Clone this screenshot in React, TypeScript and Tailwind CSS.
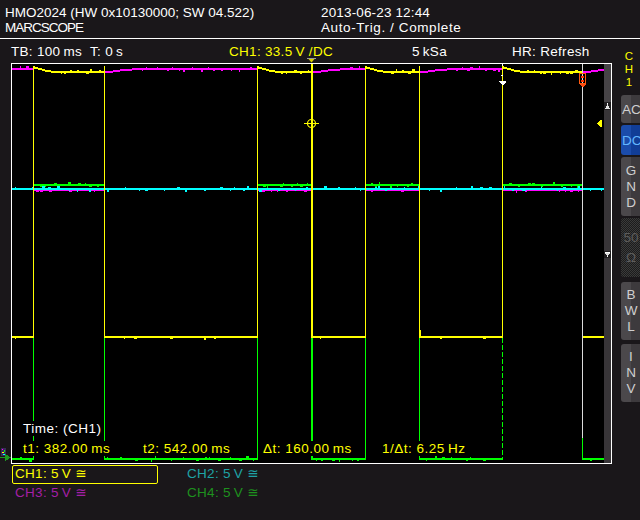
import React from "react";

// pulse train timing (page x coordinates)
const HIGH: [number, number][] = [[33, 104], [257, 311], [365, 419], [502, 582]];
const LOW: [number, number][] = [[12, 33], [104, 257], [312, 365], [419, 502], [582, 604]];
const EDGES = [33, 104, 257, 365, 419];

let seed = 11;
const rnd = () => {
  seed = (seed * 16807) % 2147483647;
  return seed / 2147483647;
};

type Tick = { x: number; y: number; w: number; h: number };

function noise(a: number, b: number, y: number, step = 9): Tick[] {
  const out: Tick[] = [];
  for (let x = a + 3 + rnd() * 6; x < b - 3; x += 3 + rnd() * step) {
    const up = rnd() < 0.5;
    const h = rnd() < 0.3 ? 2 : 1;
    out.push({ x: Math.round(x), y: up ? y - 1 - h : y + 1, w: 1 + Math.floor(rnd() * 3), h });
  }
  return out;
}

const cyanTicks = noise(12, 604, 189, 16);
const greenHiTicks = HIGH.flatMap(([a, b]) => noise(a, b, 185, 10));
const greenLoTicks = LOW.flatMap(([a, b]) => noise(a, b, 459, 14));
const magHiTicks = LOW.flatMap(([a, b], i) => noise(i === 0 ? a : a + 30, b, 69, 9));
const magLoTicks = HIGH.flatMap(([a, b]) => noise(a, b, 190, 14)).filter((t) => t.y > 190);
const yelHiTicks = HIGH.flatMap(([a, b]) => noise(a + 20, b, 72, 8));
const yelLoTicks = LOW.flatMap(([a, b]) => noise(a, b, 337, 40)).filter((t) => t.y > 337);

const droop = (a: number, b: number) =>
  `M${a} 67 L${a + 3} 68 L${a + 7} 69 L${a + 12} 70.5 L${a + 18} 71.5 L${a + 26} 72 L${b + 1} 72`;
const rise = (a: number, b: number) =>
  `M${a} 72.5 L${a + 6} 72 L${a + 12} 71 L${a + 20} 70 L${a + 28} 69.5 L${a + 40} 69 L${b + 1} 69`;

function Ticks({ list, color }: { list: Tick[]; color: string }) {
  return (
    <>
      {list.map((t, i) => (
        <rect key={i} x={t.x} y={t.y} width={t.w} height={t.h} fill={color} />
      ))}
    </>
  );
}

function Traces() {
  const Y = "#ffff00";
  const G = "#00ff00";
  const M = "#ff00ff";
  const C = "#00ffff";
  return (
    <svg width={592} height={399} viewBox="12 64 592 399" shapeRendering="crispEdges" className="block">
      {/* CH4 green */}
      {HIGH.map(([a, b]) => (
        <line key={a} x1={a} x2={b + 1} y1={185} y2={185} stroke={G} strokeWidth={2} />
      ))}
      {LOW.map(([a, b]) => (
        <line key={a} x1={a} x2={b + 1} y1={459} y2={459} stroke={G} strokeWidth={2} />
      ))}
      {EDGES.map((x) => (
        <line key={x} x1={x + 0.5} x2={x + 0.5} y1={185} y2={460} stroke={G} strokeWidth={1} />
      ))}
      <line x1={312} x2={312} y1={185} y2={460} stroke={G} strokeWidth={2} />
      <line x1={502.5} x2={502.5} y1={338} y2={460} stroke={G} strokeWidth={1} strokeDasharray="5 2" />
      <line x1={582.5} x2={582.5} y1={185} y2={460} stroke={G} strokeWidth={1} />
      <Ticks list={greenHiTicks} color={G} />
      <Ticks list={greenLoTicks} color={G} />

      {/* CH3 magenta */}
      {HIGH.map(([a, b]) => (
        <line key={a} x1={a} x2={b + 1} y1={190} y2={190} stroke={M} strokeWidth={2} />
      ))}
      <line x1={12} x2={34} y1={69} y2={69} stroke={M} strokeWidth={2} />
      {LOW.slice(1).map(([a, b]) => (
        <path key={a} d={rise(a, b)} stroke={M} strokeWidth={2} fill="none" />
      ))}
      <Ticks list={magHiTicks} color={M} />
      <Ticks list={magLoTicks} color={M} />

      {/* CH2 cyan */}
      <line x1={12} x2={604} y1={189} y2={189} stroke={C} strokeWidth={2} />
      <Ticks list={cyanTicks} color={C} />

      {/* CH1 yellow */}
      {LOW.map(([a, b]) => (
        <line key={a} x1={a} x2={b + 1} y1={337} y2={337} stroke={Y} strokeWidth={2} />
      ))}
      {HIGH.map(([a, b]) => (
        <path key={a} d={droop(a, b)} stroke={Y} strokeWidth={2} fill="none" />
      ))}
      {[...EDGES, 502].map((x) => (
        <line key={x} x1={x + 0.5} x2={x + 0.5} y1={66} y2={338} stroke={Y} strokeWidth={1} />
      ))}
      <line x1={312} x2={312} y1={64} y2={338} stroke={Y} strokeWidth={2} />
      <line x1={420.5} x2={420.5} y1={330} y2={336} stroke={Y} strokeWidth={1} />
      <Ticks list={yelHiTicks} color={Y} />
      <Ticks list={yelLoTicks} color={Y} />

      {/* cursors */}
      <line x1={502.5} x2={502.5} y1={64} y2={66} stroke="#ffffff" strokeWidth={1} />
      <rect x={501} y={75} width={2} height={1} fill="#ffffff" />
      <rect x={499} y={81} width={7} height={1} fill="#ffffff" />
      <polygon points="500,82 506,82 503,86" fill="#ffffff" />
      <line x1={582.5} x2={582.5} y1={64} y2={438} stroke="#dcdcdc" strokeWidth={1} />
      <rect x={579.5} y={73.5} width={6} height={10} fill="none" stroke="#ff5a10" strokeWidth={1} />
      <rect x={581} y={76} width={3} height={2} fill="#ff3000" />
      <rect x={581} y={80} width={3} height={2} fill="#ff3000" />
      <polygon points="580,84 586,84 583,88" fill="#ff4a10" />

      {/* crosshair */}
      <circle cx={311.5} cy={123.5} r={4} fill="none" stroke={Y} strokeWidth={1.2} shapeRendering="auto" />
      <line x1={304} x2={319} y1={123.5} y2={123.5} stroke={Y} strokeWidth={1} />
      <line x1={311.5} x2={311.5} y1={117} y2={131} stroke={Y} strokeWidth={1} />

      {/* level marker */}
      <polygon points="597,123.5 601,120 601,127" fill={Y} />
      <rect x={601} y={120} width={1} height={7} fill={Y} />
    </svg>
  );
}

function SideButton({
  h,
  mt,
  children,
  className = "",
}: {
  h: string;
  mt: string;
  children: React.ReactNode;
  className?: string;
}) {
  return (
    <div
      className={`${h} ${mt} w-[20px] rounded-l-[3px] flex flex-col items-center justify-center leading-[16px] ${className}`}
    >
      {children}
    </div>
  );
}

export default function App() {
  const grey = "bg-[linear-gradient(90deg,#4b484b_50%,#3d3a3d_50%)] text-[#cfcfcf]";
  return (
    <div className="w-[640px] h-[520px] overflow-hidden bg-[#1a171a] text-white text-[13.5px] leading-[15px] font-['Liberation_Sans','DejaVu_Sans',sans-serif] flex flex-col">
      {/* header */}
      <div className="h-[38px] flex pt-[4.5px]">
        <div className="w-[321px] pl-[5px]">
          <div>HMO2024 (HW 0x10130000; SW 04.522)</div>
          <div className="tracking-[-1px]">MARCSCOPE</div>
        </div>
        <div>
          <div className="tracking-[0.15px]">2013-06-23 12:44</div>
          <div className="tracking-[0.6px]">Auto-Trig. / Complete</div>
        </div>
      </div>
      <div className="h-px bg-white" />

      <div className="flex flex-1">
        <div className="w-[612px] flex flex-col">
          {/* status row */}
          <div className="h-[24px] relative pt-[5px] flex tracking-[0.3px]">
            <div className="w-[90px] pl-[11px]">{"TB: 100\u2009ms"}</div>
            <div className="w-[139px]">{"T: 0\u2009s"}</div>
            <div className="w-[183px] text-[#ffff00]">{"CH1: 33.5\u2009V /DC"}</div>
            <div className="w-[100px]">{"5\u2009kSa"}</div>
            <div>HR: Refresh</div>
            <svg className="absolute left-[307px] top-[19px]" width={9} height={5} viewBox="0 0 9 5">
              <rect x={0} y={0} width={9} height={1} fill="#9a9a9a" />
              <polygon points="1.5,1 7.5,1 4.5,4.5" fill="#d8d000" />
            </svg>
          </div>

          {/* graticule */}
          <div className="flex h-[401px]">
            <div className="w-[11px] flex flex-col justify-end pb-[3px]">
              <svg width={11} height={14} viewBox="0 0 11 14" shapeRendering="crispEdges">
                <rect x={1} y={1} width={5} height={8} fill="#3a2a5a" />
                <rect x={2} y={2} width={1} height={1} fill="#ff00ff" />
                <rect x={4} y={3} width={1} height={2} fill="#00ff00" />
                <rect x={2} y={5} width={2} height={1} fill="#ffff00" />
                <rect x={3} y={7} width={2} height={1} fill="#00ffff" />
                <rect x={0} y={10} width={6} height={1} fill="#1f9a1f" />
                <polygon points="5,7 11,10.5 5,14" fill="#1f9a1f" />
              </svg>
            </div>
            <div className="w-[601px] border border-white flex">
              <div className="w-[592px] bg-black relative">
                <Traces />
                <div className="absolute left-[11px] top-[356.5px] flex flex-col gap-[5px] tracking-[0.5px]">
                  <div>
                    <span className="bg-black">Time: (CH1)</span>
                  </div>
                  <div className="flex text-[#ffff00]">
                    <div className="w-[120px]">
                      <span className="bg-black">{"t1: 382.00\u2009ms"}</span>
                    </div>
                    <div className="w-[120px]">
                      <span className="bg-black">{"t2: 542.00\u2009ms"}</span>
                    </div>
                    <div className="w-[119px]">
                      <span className="bg-black">{"\u0394t: 160.00\u2009ms"}</span>
                    </div>
                    <div>
                      <span className="bg-black">{"1/\u0394t: 6.25\u2009Hz"}</span>
                    </div>
                  </div>
                </div>
              </div>
              <div className="w-[7px] flex flex-col">
                <div className="h-[38px] bg-[#464346]" />
                <div className="h-[8px] bg-[#1f1d1f] flex justify-center items-center">
                  <svg width={7} height={8} viewBox="0 0 7 8" shapeRendering="crispEdges">
                    <rect x={3} y={1} width={1} height={2} fill="#ffffff" />
                    <polygon points="1,7 3.5,2 6,7" fill="#e0e0e0" />
                  </svg>
                </div>
                <div className="h-[141px] bg-[#383538]" />
                <div className="h-[7px] bg-[#1f1d1f]">
                  <svg width={7} height={7} viewBox="0 0 7 7" shapeRendering="crispEdges">
                    <rect x={1} y={1} width={5} height={1} fill="#ffffff" />
                    <polygon points="1,2 6,2 3.5,5" fill="#e0e0e0" />
                    <rect x={3} y={5} width={1} height={1} fill="#ffffff" />
                  </svg>
                </div>
                <div className="flex-1 bg-[#383538]" />
              </div>
            </div>
          </div>

          {/* channel labels */}
          <div className="flex mt-[1px] tracking-[0.3px]">
            <div className="ml-[12px] w-[146px] h-[19px] border border-[#ffff00] rounded-[2px] pl-[2px] text-[#ffff00]">
              {"CH1: 5\u2009V \u2245"}
            </div>
            <div className="ml-[29px] pt-[1px] text-[#1ea3a6]">{"CH2: 5\u2009V \u2245"}</div>
          </div>
          <div className="flex pt-[0.5px] tracking-[0.3px]">
            <div className="w-[187px] pl-[15px] text-[#a41fa6]">{"CH3: 5\u2009V \u2245"}</div>
            <div className="text-[#1e911e]">{"CH4: 5\u2009V \u2245"}</div>
          </div>
        </div>

        {/* right side column */}
        <div className="flex-1 flex flex-col">
          <div className="h-[56px] pt-[10.5px] pl-[7px]">
            <div className="w-[20px] flex flex-col items-center text-[11.5px] leading-[13px] text-[#ffff00]">
              <span>C</span>
              <span>H</span>
              <span>1</span>
            </div>
          </div>
          <div className="pl-[9px] flex flex-col">
            <div className={`h-[28px] w-[20px] rounded-l-[3px] pl-[1px] flex items-center whitespace-nowrap ${grey}`}>AC</div>
            <div className="h-[30px] mt-[2px] w-[20px] rounded-l-[3px] pl-[1px] flex items-center whitespace-nowrap bg-[linear-gradient(90deg,#1b4cab_50%,#113d96_50%)] text-[#62b6ff]">
              DC
            </div>
            <SideButton h="h-[59px]" mt="mt-[2px]" className={grey}>
              <span>G</span>
              <span>N</span>
              <span>D</span>
            </SideButton>
            <div className="h-[59px] mt-[2px] w-[20px] rounded-l-[3px] flex flex-col items-center pt-[10px] leading-[20px] text-[#5c5c5c] bg-[repeating-conic-gradient(#3a3a3a_0_25%,#1c1c1c_0_50%)] bg-[length:2px_2px]">
              <span>50</span>
              <span>{"\u03a9"}</span>
            </div>
            <SideButton h="h-[58px]" mt="mt-[5px]" className={grey}>
              <span>B</span>
              <span>W</span>
              <span>L</span>
            </SideButton>
            <SideButton h="h-[58px]" mt="mt-[4px]" className={grey}>
              <span>I</span>
              <span>N</span>
              <span>V</span>
            </SideButton>
          </div>
        </div>
      </div>
    </div>
  );
}
